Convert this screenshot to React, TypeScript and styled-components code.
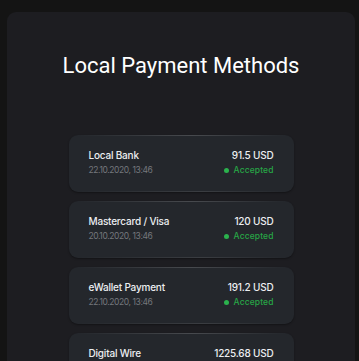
import React from 'react';
import styled, { createGlobalStyle } from 'styled-components';

const GlobalStyle = createGlobalStyle`
  html, body {
    margin: 0;
    padding: 0;
    background: #141414;
    overflow: hidden;
  }
`;

const Panel = styled.div`
  background: #1d1d21;
  border-radius: 9px;
  box-sizing: border-box;
  display: flex;
  flex-direction: column;
  align-items: center;
  height: 400px;
  margin: 12px 0 0 7px;
  padding-top: 41px;
  width: 348px;
`;

const Title = styled.h1`
  color: #ffffff;
  font-family: Roboto, 'Liberation Sans', sans-serif;
  font-size: 22px;
  font-weight: 400;
  line-height: 26px;
  margin: 0 0 56px;
`;

const List = styled.div`
  display: flex;
  flex-direction: column;
  gap: 9px;
  width: 225px;
`;

const Card = styled.div`
  background: #24272c;
  border-radius: 9px;
  box-sizing: border-box;
  display: flex;
  height: 57px;
  justify-content: space-between;
  padding: 13px 20px 0 20px;
  position: relative;
  box-shadow: 0 1px 2px rgba(0, 0, 0, 0.35);
  &::before,
  &::after {
    content: '';
    height: 1px;
    left: 10px;
    position: absolute;
    right: 10px;
    background: linear-gradient(
      90deg,
      rgba(255, 255, 255, 0) 0%,
      rgba(255, 255, 255, 0.16) 55%,
      rgba(255, 255, 255, 0) 100%
    );
  }
  &::before {
    top: 0;
  }
  &::after {
    bottom: 0;
    background: linear-gradient(
      90deg,
      rgba(255, 255, 255, 0) 0%,
      rgba(255, 255, 255, 0.1) 60%,
      rgba(255, 255, 255, 0) 100%
    );
  }
`;

const Column = styled.div<{ $align?: 'left' | 'right' }>`
  display: flex;
  flex-direction: column;
  align-items: ${(p) => (p.$align === 'right' ? 'flex-end' : 'flex-start')};
  gap: 2px;
  font-family: Inter, 'Liberation Sans', sans-serif;
`;

const Primary = styled.span`
  color: #eceef1;
  font-size: 10px;
  font-weight: 500;
  letter-spacing: -0.2px;
  line-height: 14px;
`;

const Secondary = styled.span`
  color: #74777d;
  font-size: 8.5px;
  letter-spacing: -0.4px;
  line-height: 12px;
`;

const Status = styled.span`
  align-items: center;
  color: #27a546;
  display: flex;
  font-size: 8.5px;
  font-weight: 500;
  gap: 5px;
  letter-spacing: 0.1px;
  line-height: 12px;
  &::before {
    background: #2bb24d;
    border-radius: 50%;
    content: '';
    height: 5px;
    width: 5px;
  }
`;

const payments = [
  { name: 'Local Bank', date: '22.10.2020, 13:46', amount: '91.5 USD' },
  { name: 'Mastercard / Visa', date: '20.10.2020, 13:46', amount: '120 USD' },
  { name: 'eWallet Payment', date: '22.10.2020, 13:46', amount: '191.2 USD' },
  { name: 'Digital Wire', date: '22.10.2020, 13:46', amount: '1225.68 USD' },
];

export default function App() {
  return (
    <>
      <GlobalStyle />
      <Panel>
        <Title>Local Payment Methods</Title>
        <List>
          {payments.map((p) => (
            <Card key={p.name}>
              <Column>
                <Primary>{p.name}</Primary>
                <Secondary>{p.date}</Secondary>
              </Column>
              <Column $align="right">
                <Primary>{p.amount}</Primary>
                <Status>Accepted</Status>
              </Column>
            </Card>
          ))}
        </List>
      </Panel>
    </>
  );
}
